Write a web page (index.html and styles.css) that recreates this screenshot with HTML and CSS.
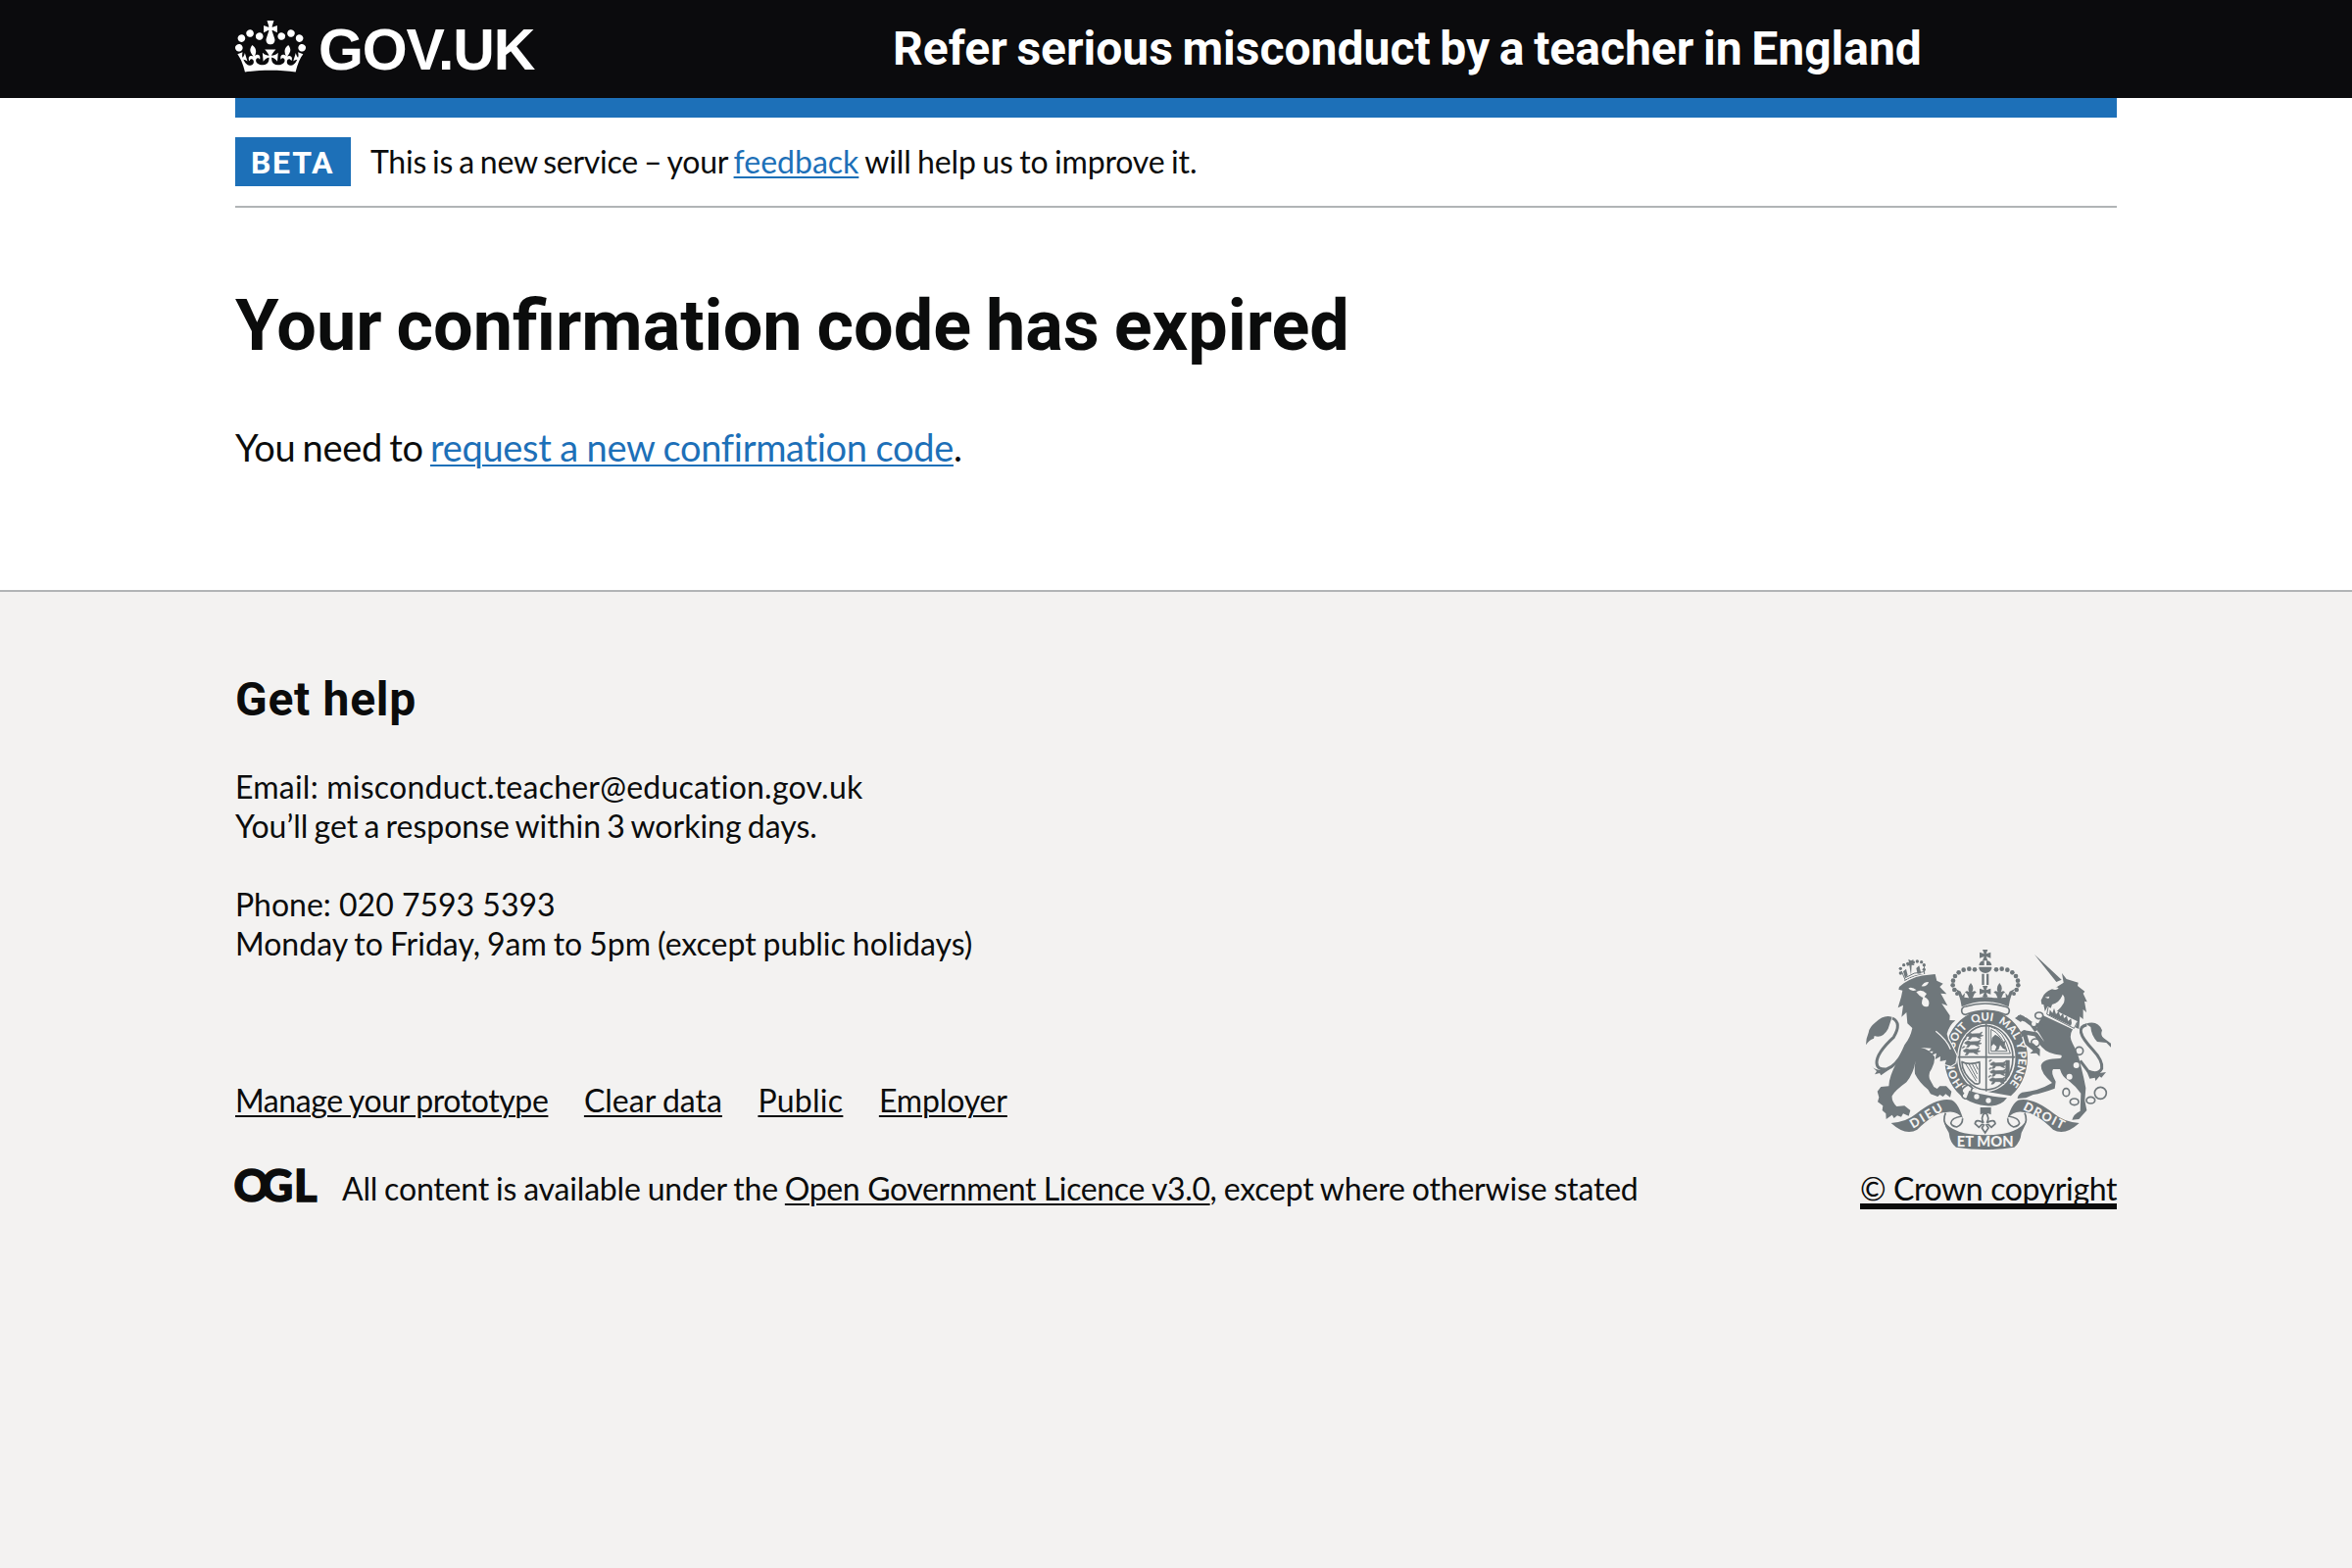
FILE: index.html
```html
<!DOCTYPE html>
<html lang="en">
<head>
<meta charset="utf-8">
<title>Your confirmation code has expired</title>
<link rel="stylesheet" href="styles.css">
</head>
<body>
<header class="header">
  <div class="container header-row">
    <a class="logo" href="#">
      <svg class="crown" viewBox="0 0 132 97" aria-hidden="true"><path fill="currentColor" fill-rule="evenodd" d="M25 30.2c3.5 1.5 7.7-.2 9.1-3.7 1.5-3.6-.2-7.8-3.9-9.2-3.6-1.4-7.6.3-9.1 3.9-1.4 3.5.3 7.5 3.9 9zM9 39.5c3.6 1.5 7.8-.2 9.2-3.7 1.5-3.6-.2-7.8-3.9-9.1-3.6-1.5-7.6.2-9.1 3.8-1.4 3.5.3 7.5 3.8 9zM4.4 57.2c3.5 1.5 7.7-.2 9.1-3.8 1.5-3.6-.2-7.7-3.9-9.1-3.5-1.5-7.6.3-9.1 3.8-1.4 3.5.3 7.6 3.9 9.1zm38.3-21.4c3.5 1.5 7.7-.2 9.1-3.8 1.5-3.6-.2-7.7-3.9-9.1-3.6-1.5-7.6.3-9.1 3.8-1.3 3.6.4 7.7 3.9 9.1zm64.4-5.6c-3.6 1.5-7.8-.2-9.1-3.7-1.5-3.6.2-7.8 3.8-9.2 3.6-1.4 7.7.3 9.2 3.9 1.3 3.5-.4 7.5-3.9 9zm15.9 9.3c-3.6 1.5-7.7-.2-9.1-3.7-1.5-3.6.2-7.8 3.7-9.1 3.6-1.5 7.7.2 9.2 3.8 1.5 3.5-.3 7.5-3.8 9zm4.7 17.7c-3.6 1.5-7.8-.2-9.2-3.8-1.5-3.6.2-7.7 3.9-9.1 3.6-1.5 7.7.3 9.2 3.8 1.3 3.5-.4 7.6-3.9 9.1zM89.3 35.8c-3.6 1.5-7.8-.2-9.2-3.8-1.4-3.6.2-7.7 3.9-9.1 3.6-1.5 7.7.3 9.2 3.8 1.4 3.6-.3 7.7-3.9 9.1zM69.7 17.7l8.9 4.7V9.3l-8.9 2.8c-.2-.3-.5-.6-.9-.9L72.4 0H59.6l3.5 11.2c-.3.3-.6.5-.9.9l-8.8-2.8v13.1l8.8-4.7c.3.3.6.7.9.9l-5 15.4v.1c-.2.8-.4 1.6-.4 2.4 0 4.1 3.1 7.5 7 8.1h.2c.3 0 .7.1 1 .1.4 0 .7 0 1-.1h.2c4-.6 7.1-4.1 7.1-8.1 0-.8-.1-1.7-.4-2.4V34l-5.1-15.4c.4-.2.7-.6 1-.9zM66 92.8c16.9 0 32.8 1.1 47.1 3.2 4-16.9 8.9-26.7 14-33.5l-9.6-3.4c1 4.9 1.1 7.2 0 10.2-1.5-1.4-3-4.3-4.2-8.7L108.6 76c2.8-2 5-3.2 7.5-3.3-4.4 9.4-10 11.9-13.6 11.2-4.3-.8-6.3-4.6-5.6-7.9 1-4.7 5.7-5.9 8-.5 4.3-8.7-3-11.4-7.6-8.8 7.1-7.2 7.9-13.5 2.1-21.1-8 6.1-8.1 12.3-4.5 20.8-4.7-5.4-12.1-2.5-9.5 6.2 3.4-5.2 7.9-2 7.2 3.1-.6 4.3-6.4 7.8-13.5 7.2-10.3-.9-10.9-8-11.2-13.8 2.5-.5 7.1 1.8 11 7.3L80.2 60c-4.1 4.4-8 5.3-12.3 5.4 1.4-4.4 8-11.6 8-11.6H55.5s6.4 7.2 7.9 11.6c-4.2-.1-8-1-12.3-5.4l1.4 16.4c3.9-5.5 8.5-7.7 10.9-7.3-.3 5.8-.9 12.8-11.1 13.8-7.2.6-12.9-2.9-13.5-7.2-.7-5 3.8-8.3 7.1-3.1 2.7-8.7-4.6-11.6-9.4-6.2 3.7-8.5 3.6-14.7-4.6-20.8-5.8 7.6-5 13.9 2.2 21.1-4.7-2.6-11.9.1-7.7 8.8 2.3-5.5 7.1-4.2 8.1.5.7 3.3-1.3 7.1-5.7 7.9-3.5.7-9-1.8-13.5-11.2 2.5.1 4.7 1.3 7.5 3.3l-4.7-15.4c-1.2 4.4-2.7 7.2-4.3 8.7-1.1-3-.9-5.3 0-10.2l-9.5 3.4c5 6.9 9.9 16.7 14 33.5 14.8-2.1 30.8-3.2 47.7-3.2z"/></svg>
      <span class="logo-text">GOV.UK</span>
    </a>
    <a class="service-name" href="#">Refer serious misconduct by a teacher in England</a>
  </div>
</header>

<div class="page">
  <div class="container">
    <div class="phase-banner">
      <strong class="tag">BETA</strong>
      <p class="phase-text"><span class="phase-lead">This is a new service – your </span><a class="link" href="#">feedback</a><span class="phase-tail"> will help us to improve it.</span></p>
    </div>
    <main class="main">
      <h1 class="title">Your confirmation code has expired</h1>
      <p class="lead"><span class="lead-start">You need to </span><a class="link lead-link" href="#">request a new confirmation code</a>.</p>
    </main>
  </div>
</div>

<footer class="footer">
  <div class="container">
    <h2 class="help-title">Get help</h2>
    <div class="footer-row">
      <div class="footer-main">
        <p class="help-text"><span class="help-email">Email: misconduct.teacher@education.gov.uk</span><br><span class="help-reply">You’ll get a response within 3 working days.</span></p>
        <p class="help-text">Phone: 020 7593 5393<br><span class="help-hours">Monday to Friday, 9am to 5pm (except public holidays)</span></p>
        <ul class="footer-links">
          <li><a class="link-manage" href="#">Manage your prototype</a></li>
          <li><a class="link-clear" href="#">Clear data</a></li>
          <li><a class="link-public" href="#">Public</a></li>
          <li><a class="link-employer" href="#">Employer</a></li>
        </ul>
        <div class="licence">
          <svg class="ogl" viewBox="0 0 82 34" aria-hidden="true"><text x="-1.5 26.5 60" y="33">OGL</text></svg>
          <p class="licence-text"><span class="licence-lead">All content is available under the </span><a class="licence-link" href="#">Open Government Licence v3.0</a><span class="licence-lead">, except where otherwise stated</span></p>
        </div>
      </div>
      <a class="copyright" href="#">
        <svg class="arms" viewBox="72 60 750 612" aria-hidden="true">
          <defs>
            <g id="pearls"><circle cx="405" cy="121" r="7"/><circle cx="388" cy="119" r="7"/><circle cx="371" cy="122" r="7"/><circle cx="356" cy="130" r="7"/><circle cx="345" cy="141" r="7"/><circle cx="339" cy="155" r="7"/><circle cx="338" cy="169" r="7"/><circle cx="343" cy="183" r="7"/><circle cx="351" cy="195" r="6"/></g>
            <g id="fleur"><path d="M393 162q12 14 4 28q10-8 13 2q-6-1-8 8l-4 10h-10l-4-10q-3-9-9-8q4-10 13-2q-7-14 5-28z"/></g>
            <path id="pattee" d="M-8-17H8L3-4L17-9V9L3 4L8 17H-8L-3 4L-17 9V-9L-3-4z"/>
            <g id="passant" class="charge"><path d="M2 9l10-6 8 3 22-1 9-5-5 9 8 2-11 4 4 6-9-3-5-3-13 0-5 7-7 1 5-9-8-1z"/><path d="M0 3q-2-8 8-6"/></g>
            <path id="motto" pathLength="360" d="M440 505A99 114 0 0 1 440 277A99 114 0 0 1 440 505"/>
          </defs>
          <!-- crown -->
          <use href="#pattee" transform="translate(437 77)"/>
          <path d="M418 108q2-14 16-14v14zM457 108q-2-14-16-14v14zM418 113h39v5q-4 13-19 14q-16-1-20-14z"/>
          <path d="M427 134h7v34h-7zM441 134h7v34h-7z"/>
          <use href="#pearls"/><use href="#pearls" transform="matrix(-1 0 0 1 876 0)"/>
          <use href="#pattee" transform="translate(437 188)"/>
          <use href="#fleur"/><use href="#fleur" transform="translate(88 0)"/>
          <path d="M346 180l16 8 5 13 8-8-2 13q32 4 64-2q32 6 64 2l-2-13 8 8 5-13 16-8q-14 18-19 55q-72-32-144 0q-5-37-19-55z"/>
          <path class="line" d="M378 234q59-18 118 0q14 2 15 12q0 13-12 13q-60-24-122 0q-12 0-12-13q1-11 13-12z"/>
          <!-- garter and shield -->
          <path d="M440 245a127 146 0 1 1-1 0zM440 287a89 104 0 1 0 1 0z" fill-rule="evenodd"/>
          <ellipse class="line" cx="440" cy="391" rx="82" ry="98"/>
          <path class="line" d="M440 286v210M352 389h177"/>
          <path class="thin" d="M448 294q46 9 66 84h-66zM455 304v67h49q-15-52-49-67z"/>
          <path d="M458 330l10-10 13 8 10 14 10-4-6 14 8 16-12-6-8-10-5 14-12 5 6-14-9-8-9 8 2-14z"/>
          <use href="#passant" transform="translate(377 312)"/><use href="#passant" transform="translate(372 336)"/><use href="#passant" transform="translate(368 360)"/>
          <use href="#passant" transform="translate(450 401)"/><use href="#passant" transform="translate(450 425)"/><use href="#passant" transform="translate(448 449)"/>
          <path d="M500 398h12v46l-14 14z"/>
          <path class="line" d="M364 403q22 12 58 1M366 404q0 35 39 66q14 4 15-4V405"/><path class="thin" d="M377 409l33 54M388 411l24 44M398 411l15 30M407 409l8 18"/>
          <g class="motto"><text><textPath href="#motto" startOffset="64">HON</textPath></text><text><textPath href="#motto" startOffset="126">SOIT</textPath></text><text><textPath href="#motto" startOffset="174">QUI</textPath></text><text><textPath href="#motto" startOffset="220">MAL</textPath></text><text><textPath href="#motto" startOffset="251">Y</textPath></text><text><textPath href="#motto" startOffset="288">PENSE</textPath></text></g>
          <path class="cut" d="M366 478q15-12 28 6q60 14 122 24q-20 40-76 34q-36-4-70-24z"/>
          <path d="M388 492q50 17 116 22q-20 28-64 24q-36-4-62-20z"/>
          <path class="line" d="M374 480q14-12 24 4q-8 12 0 18q-8 18-24 14q-14-6-4-16q-10-10 4-20z"/>
          <circle class="cut" cx="411" cy="510" r="8"/><circle class="cut" cx="447" cy="522" r="8"/>
          <!-- lion -->
          <path class="thin" d="M190 155q31-19 63-19M181 126l12 28M250 106l1 30M193 146q25-18 56-18"/>
          <g><circle cx="178" cy="132" r="5"/><circle cx="178" cy="118" r="5"/><circle cx="188" cy="107" r="5"/><circle cx="200" cy="103" r="5"/><circle cx="217" cy="99" r="5"/><circle cx="229" cy="96" r="5"/><circle cx="242" cy="98" r="5"/><circle cx="250" cy="107" r="5"/><circle cx="250" cy="121" r="5"/><path d="M202 89l8 5 8-4-4 10 7 8-9-1-2 32-5-31-8 3 7-10zM186 127l9-8 5 20-8 8zM226 117l9-8 6 24-11 1z"/></g>
          <path class="beast" d="M188 163Q225 138 264 137L284 135L289 155L308 164L298 174L319 196L301 194L322 232L304 225L329 262L328 276L346 277Q328 290 320 318Q322 335 334 352L350 385L346 407L332 416L314 411L318 398L299 402L300 387L284 396L288 377L270 384L278 371L264 372L272 362L240 360Q268 366 282 388Q284 405 273 425Q262 438 267 456L280 480L290 486L298 478L318 478L334 494L330 512L316 502L308 510L298 504L292 510L270 502L262 488Q236 468 222 440Q220 420 224 400Q218 440 196 466Q160 492 152 508Q150 524 166 540L190 538L208 552L203 569L186 562L180 572L168 568L158 576L152 566L134 579L133 562L122 552L124 538L108 526L112 512L107 494L118 480L142 478Q142 450 168 402L190 352Q208 330 214 300L199 286L196 252L181 266L186 230L170 238L180 205L184 185L172 182L174 174Z"/>
          <path class="cut" d="M202 178q12-5 25 6q-18 6-25-6zM242 172q8-14 22-13q-4 15-22 13zM226 190q15-12 32 5l-7 10q20 10 12 28q-14 6-20-8q0-10 4-18q-12-4-21-17z"/>
          <path class="cutline" d="M286 310q33 26 45 55"/>
          <path class="tail" d="M187 372q-24 46-52 54q-30 2-30-20q0-30 52-78q26-44-4-58"/>
          <path d="M152 266q-26-8-50 16q-21 17-22 32q-8 18-8 38q12-18 24-20l2-8q25 9 42-22zM88 416q20 20 58 9l-28 20-4-7-15 4 6-10z"/>
          <!-- unicorn -->
          <path d="M588 75l83 77-16 7zM672 132l14 18 36 11-2 10 22 17-5 6 12 26-8-2 6 34-10-9 0 30-10-8-3 38-94-42q30-6 48-38q5-18-4-26q-8 25-32 31l-5 14-10-5-7 12-4-21-6-1-2-12 9-17q10-13 34-20l26-17z"/>
          <path class="cut" d="M642 181q10-11 20-3q-6 8-20 3zM634 203l-14 3 11 4z"/>
          <path d="M615 262l90 42q-13 22 0 44q18 32 24 64l10 42 6 30-3 38 6 30-24 27-21 2q5-18 25-27l2-54q-16-22-39-40q-18-10-25-34l-21 0q-8 9 8 38l-3 21q-40 15-66 19l-22 10-26 2q0-12 14-19q50-4 92-29q-35-30-34-53q6-22 58-22q8-4 4-10q-40-2-60-25q-14-14-5-34q-20-22 4-53z"/>
          <path class="cut" d="M628 234l92 46-10 26-91-47z"/>
          <path class="thin" d="M630 236l-4 22 83 43 10-20"/>
          <path d="M633 258l2-14 8 10 5-15 6 19 8-9 5 15 9-10 2 16 9-7 4 16 9-8 2 14-3 8-71-35z"/>
          <path class="limb-edge" d="M608 345l-16-26-36-6 10 34 30 24"/>
          <path class="limb" d="M612 296l-34-9-18-13-24-7M578 286l16 22M612 345l-20-26-36-6 10 34 30 24"/>
          <path d="M568 350l15-4 22 19-1 22-10-10-20 1 11-10zM528 270l16-11 14 6-12 17zM545 312l14-6 4 14-14 8z"/>
          <path class="tail" d="M728 400l24 32q32 13 42-8q4-24-28-58q-62-66-18-76"/>
          <path d="M745 287q37-12 50 20q-6 16 5 24l22 16v12l-14-14-28-3q-18-19-20-45zM745 425q12 20 62 10l-14 17-6-4-12 14-2-10-16 3z"/>
          <g class="chain"><ellipse cx="602" cy="262" rx="12" ry="10"/><ellipse cx="591" cy="345" rx="13" ry="12"/><ellipse cx="725" cy="370" rx="12" ry="12"/><ellipse cx="685" cy="497" rx="10" ry="12"/><ellipse cx="710" cy="526" rx="13" ry="10"/><ellipse cx="760" cy="521" rx="13" ry="10"/><circle cx="790" cy="499" r="18"/></g>
          <g class="cut"><circle cx="586" cy="287" r="7"/><circle cx="716" cy="414" r="9"/><circle cx="695" cy="449" r="9"/></g>
          <!-- ribbon and motto -->
          <g id="ribbon"><path d="M149 591q45-2 78-29q61-48 102-42q22 0 40 57q-20-26-52-19q-34 0-88 53q-35 21-80-20z"/><path class="line" d="M316 560q-10 22 3 40M368 577q0 20-18 26q-16-3-18-12q2-16 33-21"/></g>
          <use href="#ribbon" transform="matrix(-1 0 0 1 874 0)"/>
          <path d="M310 583q28 45 127 45t127-45q-6 20-16 38q-3 29-22 44q-90 14-178 0q-19-14-22-44q-12-18-16-38z"/>
          <path d="M422 543h33v22q-17-10-33 0z"/>
          <path class="line" d="M437 558q-16 14-5 32q-24-14-26 3l12 11 9-9 6 2-6 9 10 15 10-15-6-9 6-2 9 9 12-11q-2-17-26-3q11-18-5-32z"/>
          <g class="ribbon-text"><text transform="translate(216 608) rotate(-31)" textLength="110">DIEU</text><text transform="translate(551 549) rotate(27)" textLength="136">DROIT</text><text class="ribbon-centre" x="350" y="662" textLength="174">ET MON</text></g>
        </svg>
        <span class="copyright-text">© Crown copyright</span>
      </a>
    </div>
  </div>
</footer>
</body>
</html>
```
FILE: styles.css
```css
* { box-sizing: border-box; }
html { background: #f3f2f1; }
body {
  margin: 0;
  color: #0b0c0c;
  font: 32px/40px Lato, "Liberation Sans", sans-serif;
  white-space: nowrap;
}
p, h1, h2, ul { margin: 0; padding: 0; }
a { color: inherit; text-decoration-thickness: 2px; text-underline-offset: 3px; }
.container { width: 1920px; margin: 0 auto; }

.header { height: 100px; background: #0b0b0d; color: #fff; }
.header-row { display: flex; }
.header a { text-decoration: none; }
.logo { display: flex; width: 671px; padding-top: 21px; gap: 13px; }
.crown { width: 72px; height: 53px; }
.logo-text { font: 700 59px/60px "Liberation Sans", sans-serif; letter-spacing: -1.2px; }
.service-name {
  padding-top: 20px;
  font: 700 48px/60px Roboto, sans-serif;
  word-spacing: -2.3px;
}

.page { background: #fff; }
.phase-banner {
  display: flex;
  height: 112px;
  padding-top: 20px;
  gap: 20px;
  border-top: 20px solid #1d70b8;
  border-bottom: 2px solid #b1b4b6;
}
.tag {
  width: 118px;
  height: 50px;
  padding-left: 16px;
  background: #1d70b8;
  color: #fff;
  font: 700 32px/52px Roboto, sans-serif;
  letter-spacing: 1.7px;
}
.phase-text { padding-top: 5px; }
.phase-lead { letter-spacing: -.25px; word-spacing: -1.9px; }
.phase-tail { letter-spacing: -.15px; word-spacing: -1.5px; }
.link { color: #1d70b8; }

.main { height: 390px; padding-top: 81px; }
.title { font: 700 72px/80px Roboto, sans-serif; word-spacing: -3px; }
.lead { margin-top: 58px; font-size: 38px; line-height: 50px; }
.lead-start { letter-spacing: -.3px; word-spacing: -2.2px; }
.lead-link { letter-spacing: -.3px; word-spacing: -.75px; }

.footer { height: 998px; padding-top: 80px; border-top: 2px solid #b1b4b6; background: #f3f2f1; }
.help-title { font: 700 48px/60px Roboto, sans-serif; letter-spacing: .7px; }
.footer-row { display: flex; justify-content: space-between; align-items: flex-end; margin-top: 39px; }
.help-text { margin-bottom: 40px; }
.help-email { letter-spacing: .231px; }
.help-reply { word-spacing: -2px; }
.help-hours { word-spacing: -1.2px; }
.footer-links { display: flex; gap: 36.5px; margin-top: 120px; list-style: none; }
.link-manage { letter-spacing: -.4px; word-spacing: -.9px; }
.link-clear { word-spacing: -.9px; }
.link-public { letter-spacing: .27px; }
.link-employer { letter-spacing: -.135px; }
.licence { display: flex; align-items: flex-start; margin-top: 50px; gap: 27px; }
.ogl { width: 82px; height: 34px; overflow: visible; }
.ogl text { font: 900 45px Lato, sans-serif; fill: #0b0c0c; stroke: #0b0c0c; stroke-width: 1.4px; }
.licence-lead { letter-spacing: -.17px; word-spacing: -1.1px; }
.licence-link { letter-spacing: -.38px; }

.copyright { display: flex; flex-direction: column; align-items: center; gap: 20px; text-decoration: none; }
.copyright-text {
  letter-spacing: -.376px;
  text-decoration: underline 6px;
  text-underline-offset: 3px;
  text-decoration-skip-ink: none;
}
.arms { width: 250px; height: 204px; fill: #6f777b; overflow: visible; }
.arms .line, .arms .thin, .arms .chain, .arms .tail, .arms .limb, .arms .limb-edge, .arms .cutline { fill: none; stroke: #6f777b; stroke-width: 5; }
.arms .thin { stroke-width: 3; }
.arms .tail { stroke-width: 9; }
.arms .limb { stroke-width: 13; stroke-linejoin: round; }
.arms .limb-edge { stroke: #f3f2f1; stroke-width: 21; stroke-linejoin: round; }
.arms .cut { fill: #f3f2f1; }
.arms .cutline { stroke: #f3f2f1; stroke-width: 4; }
.arms .beast { stroke: #f3f2f1; stroke-width: 7; paint-order: stroke; }
.arms .charge { stroke: #6f777b; stroke-width: 2; }
.motto { font: 900 34px Lato, sans-serif; fill: #f3f2f1; text-anchor: middle; }
.ribbon-text { font: 900 38px Lato, sans-serif; fill: #f3f2f1; }
.ribbon-centre { font-size: 44px; }
```
